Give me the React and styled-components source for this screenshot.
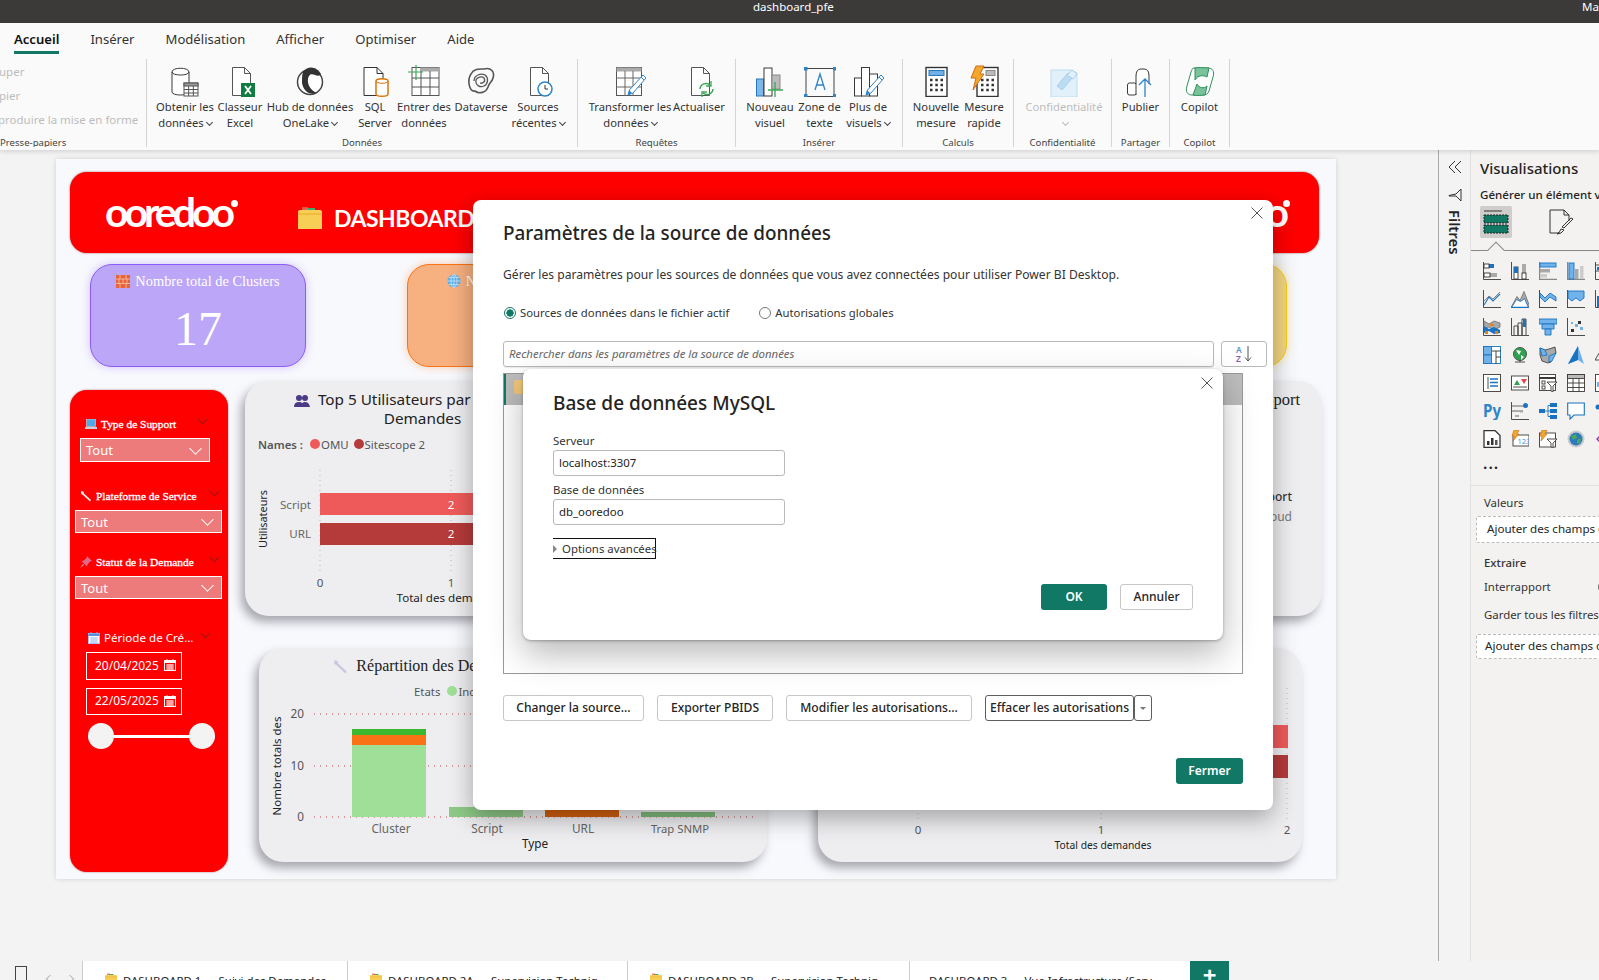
import React from 'react';
import styled, { createGlobalStyle } from 'styled-components';

const UI = '"Noto Sans", "Open Sans", sans-serif';
const SERIF = '"Liberation Serif", serif';
const TEAL = '#117865';

const Global = createGlobalStyle`
  html, body { margin: 0; padding: 0; background: #f3f3f3; overflow: hidden; }
  * { box-sizing: border-box; }
  #root { width: 1599px; height: 980px; }
  svg { display: block; }
`;

const Shell = styled.div`
  position: relative; width: 1599px; height: 980px; overflow: hidden;
  display: flex; flex-direction: column; font-family: ${UI}; color: #252423;
`;
const TitleBar = styled.header`
  height: 23px; flex: none; background: #3b3a39; color: #fff; font-size: 11.5px;
  display: flex; justify-content: space-between; padding: 0 0 0 753px; line-height: 14px;
`;
const TitleUser = styled.span` width: 17px; overflow: hidden; `;

const Ribbon = styled.section`
  height: 127px; flex: none; background: #fafafa; box-shadow: 0 2px 4px rgba(0,0,0,.12); z-index: 1;
  display: flex; flex-direction: column;
`;
const TabRow = styled.nav` height: 36px; flex: none; display: flex; padding-left: 14px; gap: 31px; `;
const RibbonTab = styled.span`
  height: 31px; padding-top: 7px; font-size: 13.1px; line-height: 18px;
  color: ${p => p.$active ? '#111' : '#333'}; font-weight: ${p => p.$active ? 600 : 400};
  border-bottom: ${p => p.$active ? `3px solid ${TEAL}` : 'none'};
`;
const GroupRow = styled.div` display: flex; height: 88px; `;
const Group = styled.div`
  width: ${p => p.$w}px; flex: none; border-right: 1px solid #d4d4d4;
  display: flex; flex-direction: column;
`;
const GroupBody = styled.div`
  flex: 1; display: flex; padding-left: ${p => p.$pad || 0}px; justify-content: ${p => p.$center ? 'center' : 'flex-start'};
`;
const GroupName = styled.div`
  height: 11px; font-size: 9.6px; line-height: 14px; text-align: center; color: #444;
`;
const ClipList = styled.div`
  padding-top: 5px; display: flex; flex-direction: column; gap: 9px; width: 146px; overflow: hidden;
  font-size: 11.5px; line-height: 15px; color: #bdbdbd;
`;
const Cut = styled.div` margin-left: ${p => p.$x || 0}px; white-space: nowrap; `;
const ClipName = styled.div` height: 11px; font-size: 9.6px; line-height: 14px; color: #444; white-space: nowrap; overflow: hidden; `;

const Item = styled.div`
  width: ${p => p.$w}px; flex: none; display: flex; flex-direction: column; align-items: center;
  font-size: 11.2px; line-height: 16px; text-align: center; white-space: nowrap;
  color: ${p => p.$muted ? '#bdbdbd' : '#333'};
`;
const ItemIcon = styled.div` height: 40px; padding-top: 6px; flex: none; `;
const Caret = styled.span`
  display: inline-block; width: 5px; height: 5px; margin-left: 3px; position: relative; top: -2px;
  border-right: 1px solid ${p => p.$muted ? '#bbb' : '#444'}; border-bottom: 1px solid ${p => p.$muted ? '#bbb' : '#444'};
  transform: rotate(45deg);
`;

const Workspace = styled.main` flex: 1; display: flex; min-height: 0; `;
const Canvas = styled.div` width: 1439px; flex: none; padding: 9px 0 0 56px; background: #f3f3f3; border-right: 1px solid #aaa; `;
const Page = styled.div`
  width: 1280px; height: 720px; background: #f8f9fd; padding-top: 13px; box-shadow: 0 0 5px rgba(0,0,0,.14);
`;
const Banner = styled.div`
  height: 81px; margin: 0 17px 0 14px; background: #f00; border-radius: 17px; box-shadow: 0 0 2px rgba(120,0,0,.7);
  display: flex; align-items: flex-start; padding: 23px 34px 0 35px; justify-content: space-between;
`;
const BannerLeft = styled.div` display: flex; align-items: flex-start; `;
const Logo = styled.div`
  position: relative; width: 128px; height: 36px; font: 700 41px/33px Lato, sans-serif; letter-spacing: -4px; color: #fff;
  margin-right: 65px;
  &::after { content: ''; position: absolute; right: -5px; top: 5px; width: 7px; height: 7px; border-radius: 50%; background: #fff; }
`;
const LogoEnd = styled(Logo)` margin-right: 0; width: 44px; text-align: right; `;
const BannerTitle = styled.div` font: 700 23px/26px Lato, sans-serif; letter-spacing: -.5px; color: #fff; white-space: nowrap; `;
const BannerGroup = styled.div` display: flex; align-items: center; gap: 12px; padding-top: 10px; `;

const KpiRow = styled.div` display: flex; margin: 11px 49px 0 34px; gap: 101px; `;
const Kpi = styled.div`
  width: ${p => p.$w}px; height: 103px; border-radius: 22px; border: 1px solid ${p => p.$line};
  margin-left: ${p => p.$push ? 'auto' : '0'};
  background: ${p => p.$bg}; box-shadow: 0 0 10px ${p => p.$glow}; color: #fff; text-align: center; padding-top: 7px;
`;
const KpiTitle = styled.div`
  display: flex; justify-content: center; align-items: center; gap: 5px; height: 18px;
  font: 400 14.4px/18px ${SERIF}; color: #fff; white-space: nowrap;
`;
const KpiValue = styled.div` font: 400 48px/56px ${SERIF}; margin-top: 11px; `;

const MainRow = styled.div` display: flex; margin: 14px 0 0 14px; `;
const Sidebar = styled.aside`
  width: 158px; height: 482px; margin-top: 9px; background: #f00; border-radius: 17px; padding-top: 26px; flex: none;
  box-shadow: 0 0 2px rgba(120,0,0,.6); color: #fff;
`;
const Filter = styled.div` margin-top: ${p => p.$top || 0}px; padding-left: ${p => p.$left}px; `;
const FilterHead = styled.div`
  height: 16px; display: flex; align-items: center; justify-content: space-between;
  padding: 0 ${p => p.$right}px 0 ${p => p.$pad}px; margin-bottom: 6px;
`;
const FilterLabel = styled.span`
  display: flex; align-items: center; gap: 4px; white-space: nowrap; color: #fff;
  font: ${p => p.$plain ? `400 11.6px/16px ${UI}` : `400 11.4px/16px ${SERIF}`};
  -webkit-text-stroke: ${p => p.$plain ? '0' : '.3px #fff'};
`;
const Fold = styled.span`
  width: 7px; height: 7px; border-right: 1px solid #a01414; border-bottom: 1px solid #a01414;
  transform: rotate(45deg); position: relative; top: -5px;
`;
const Dropdown = styled.div`
  width: ${p => p.$w}px; height: ${p => p.$h}px; background: #ee7b7b; border: 1.5px solid #fff; color: #fff;
  font-size: 13px; line-height: 20px; padding: 0 6px 0 5px; display: flex; justify-content: space-between; align-items: center;
`;
const WhiteCaret = styled.span`
  width: 9px; height: 9px; border-right: 1.5px solid #fff; border-bottom: 1.5px solid #fff; transform: rotate(45deg);
  position: relative; top: -2px; margin-right: 3px;
`;
const DateBox = styled.div`
  width: 96px; height: ${p => p.$h}px; margin: ${p => p.$top}px 0 0 16px; border: 1.5px solid #fff;
  font-size: 12px; color: #fff; display: flex; align-items: center; justify-content: space-between; padding: 0 5px 2px 8px;
`;
const Slider = styled.div`
  width: 127px; height: 26px; margin: 8px 0 0 18px; display: flex; align-items: center; justify-content: space-between;
  background: linear-gradient(#fff, #fff) center / 100% 3px no-repeat;
`;
const Knob = styled.span` width: 26px; height: 26px; border-radius: 50%; background: #f3f3f3; `;

const ChartColumn = styled.div` margin-left: 17px; display: flex; flex-direction: column; `;
const ChartRow = styled.div`
  display: flex; gap: ${p => p.$gap}px; margin: ${p => p.$top || 0}px 0 0 ${p => p.$left || 0}px;
`;
const Card = styled.article`
  width: ${p => p.$w}px; height: ${p => p.$h}px; flex: none; background: #eeeef1; border-radius: 24px;
  box-shadow: -4px 6px 10px rgba(90,90,100,.5); overflow: hidden; position: relative;
`;
const CardTitle = styled.h3`
  margin: 0; padding-top: ${p => p.$top}px; font: 400 ${p => p.$size}px/19px ${p => p.$serif ? SERIF : UI}; color: #222;
  text-align: center; height: ${p => p.$height}px; white-space: pre-line;
`;
const TitleGlyph = styled.span` display: inline-block; vertical-align: -3px; margin-right: 8px; `;
const Legend = styled.div`
  display: flex; align-items: center; height: 16px; font-size: 11.4px; color: #555; padding-left: ${p => p.$left}px; white-space: nowrap;
  margin-bottom: ${p => p.$after}px;
`;
const LegendKey = styled.span` font-weight: ${p => p.$bold ? 600 : 400}; margin-right: ${p => p.$gap}px; `;
const Dot = styled.span` width: 10px; height: 10px; border-radius: 50%; background: ${p => p.$c}; margin-right: 1px; flex: none; `;
const LegendName = styled.span` margin-right: 5px; `;

const FilterStrip = styled.div`
  width: 32px; flex: none; background: #f3f3f3; border-right: 1px solid #e1e1e1; padding-top: 10px;
  display: flex; flex-direction: column; align-items: center;
`;
const StripGlyph = styled.div` margin-top: ${p => p.$top}px; `;
const FilterWord = styled.div`
  writing-mode: vertical-rl; font-size: 14.8px; font-weight: 600; color: #252423; margin-top: 8px; line-height: 16px;
`;
const VizPane = styled.aside` flex: 1; background: #f3f2f1; overflow: hidden; `;
const VizTitle = styled.div` font-size: 15px; font-weight: 500; line-height: 20px; padding: 8px 0 0 9px; color: #252423; `;
const VizSub = styled.div` font-size: 11.6px; font-weight: 500; line-height: 16px; padding: 9px 0 0 9px; white-space: nowrap; `;
const BuildRow = styled.div`
  position: relative; height: 45px; margin-top: 3px; padding-left: 9px; display: flex; gap: 34px; border-bottom: 1px solid #8a8886;
  &::after {
    content: ''; position: absolute; left: 19px; bottom: -6px; width: 11px; height: 11px; background: #f3f2f1;
    border-left: 1px solid #8a8886; border-top: 1px solid #8a8886; transform: rotate(45deg);
  }
`;
const BuildBtn = styled.div`
  width: 32px; height: 32px; border-radius: 2px; background: ${p => p.$on ? '#cfcdcb' : 'transparent'};
  display: flex; align-items: center; justify-content: center;
`;
const VizGrid = styled.div`
  display: grid; grid-template-columns: repeat(5, 18px); grid-auto-rows: 18px; gap: 10px; padding: 11px 0 0 12px; width: 170px;
`;
const More = styled.div` padding: 9px 0 0 12px; font-size: 16px; line-height: 12px; letter-spacing: 1px; height: 37px; font-weight: 600; `;
const PaneLine = styled.div` border-top: 1px solid #e1dfdd; `;
const FieldLabel = styled.div`
  font-size: 11.4px; line-height: 16px; padding: ${p => p.$top}px 0 0 13px; white-space: nowrap; color: #333;
  font-weight: ${p => p.$semi ? 500 : 400}; width: 160px; display: flex; justify-content: space-between;
`;
const Toggle = styled.span`
  width: 33px; height: 14px; border-radius: 7px; margin-top: 1px;
  background: ${p => p.$on ? TEAL : '#fff'}; border: 1px solid ${p => p.$on ? TEAL : '#666'};
`;
const DropZone = styled.div`
  height: ${p => p.$h}px; margin: ${p => p.$top}px 0 0 5px; width: 140px; border: 1px dashed #bdbbb9; border-radius: 2px; background: #fff;
  font-size: 11.6px; line-height: ${p => p.$h - 3}px; padding-left: ${p => p.$pad}px; white-space: nowrap; overflow: hidden;
`;

const SheetBar = styled.footer` height: 19px; flex: none; display: flex; background: #f3f3f3; overflow: hidden; padding-left: 15px; `;
const PageGlyph = styled.span` width: 12px; height: 19px; border: 1px solid #444; border-bottom: none; flex: none; margin-top: 5px; `;
const Arrows = styled.span` width: 55px; flex: none; display: flex; gap: 14px; padding: 15px 0 0 20px; `;
const ArrowMark = styled.span` width: 6px; height: 6px; border-left: 1.5px solid #bbb; border-top: 1.5px solid #bbb; transform: rotate(${p => p.$r}deg); `;
const Sheet = styled.div`
  width: ${p => p.$w}px; flex: none; background: #fff; border-left: 1px solid #ccc; display: flex; gap: 6px;
  padding: 12px 0 0 ${p => p.$pad}px; font-size: 11.4px; line-height: 16px; white-space: nowrap; overflow: hidden; color: #222;
`;
const AddSheet = styled.div`
  width: 39px; flex: none; background: ${TEAL}; color: #fff; font-size: 24px; font-weight: 700; line-height: 27px; text-align: center;
`;

const Dialog = styled.section`
  position: absolute; left: 473px; top: 200px; width: 800px; height: 610px; background: #fff; border-radius: 8px; z-index: 5;
  box-shadow: 0 8px 24px rgba(0,0,0,.32); padding: 21px 30px 0;
`;
const Close = styled.div` position: absolute; right: ${p => p.$r}px; top: ${p => p.$t}px; `;
const DialogTitle = styled.h2` margin: 0; font-size: 18.9px; font-weight: 500; line-height: 24px; color: #252423; `;
const DialogText = styled.p` margin: 21px 0 0; font-size: 12.1px; line-height: 18px; color: #333; white-space: nowrap; `;
const RadioRow = styled.div` display: flex; margin-top: 19px; height: 18px; align-items: center; font-size: 11.3px; color: #333; white-space: nowrap; `;
const Radio = styled.span`
  width: 12px; height: 12px; border-radius: 50%; border: 1px solid ${p => p.$on ? TEAL : '#777'}; flex: none; margin: 1px 4px 0 ${p => p.$left || 1}px;
  background: ${p => p.$on ? `radial-gradient(circle, ${TEAL} 0 3.4px, #fff 3.9px)` : '#fff'};
`;
const SearchRow = styled.div` display: flex; gap: 7px; margin-top: 20px; `;
const SearchBox = styled.div`
  width: 711px; height: 26px; flex: none; border: 1px solid #b9b9b9; border-radius: 3px; padding-left: 5px; font-style: italic;
  font-size: 11.4px; line-height: 24px; color: #666; box-shadow: 0 1px 1px rgba(0,0,0,.08);
`;
const SortBtn = styled.div`
  width: 46px; height: 26px; flex: none; border: 1px solid #b9b9b9; border-radius: 3px; display: flex; align-items: center; justify-content: center;
`;
const ListBox = styled.div` width: 740px; height: 301px; margin-top: 6px; border: 1px solid #999; background: #fff; `;
const ListHead = styled.div` height: 31px; background: #bdbdbd; border-left: 2px solid ${TEAL}; padding: 6px 0 0 8px; `;
const ListMark = styled.span` display: block; width: 14px; height: 14px; background: #f1c67a; border-radius: 2px; `;
const ActionRow = styled.div` display: flex; gap: 13px; margin-top: 21px; `;
const Action = styled.button`
  width: ${p => p.$w}px; height: 26px; padding: 0; background: #fff; font: 500 12.1px/22px ${UI}; color: #252423; flex: none;
  border: 1px solid ${p => p.$dark ? '#605e5c' : '#c8c6c4'}; border-radius: 3px; white-space: nowrap;
`;
const SplitCaret = styled(Action)` margin-left: -13px; display: flex; align-items: center; justify-content: center; `;
const CaretDown = styled.span` width: 0; height: 0; border: 3px solid transparent; border-top: 3px solid #777; border-bottom: none; `;
const Primary = styled.button`
  width: ${p => p.$w}px; height: 26px; padding: 0; border: none; border-radius: 3px; background: ${TEAL}; color: #fff;
  font: 600 12px/26px ${UI};
`;
const DialogFoot = styled.div` display: flex; justify-content: flex-end; margin: 37px 0 0; `;

const InnerDialog = styled.section`
  position: absolute; left: 50px; top: 169px; width: 700px; height: 271px; background: #fff; border-radius: 8px;
  box-shadow: 0 1px 3px rgba(0,0,0,.3), 0 14px 34px rgba(0,0,0,.28); padding: 22px 30px 0;
`;
const InnerTitle = styled.h2` margin: 0; font-size: 19px; font-weight: 500; line-height: 24px; color: #252423; `;
const InnerLabel = styled.label` display: block; font-size: 11.4px; line-height: 16px; margin-top: ${p => p.$top}px; color: #333; `;
const InnerInput = styled.div`
  width: 232px; height: 26px; margin-top: 1px; border: 1px solid #b9b9b9; border-radius: 3px; font-size: 11.4px; line-height: 24px; padding-left: 5px; color: #222;
`;
const Advanced = styled.div`
  width: 103px; height: 21px; margin-top: 13px; border: 1px solid #111; border-left: none; font-size: 11.4px; line-height: 19px; color: #333;
  display: flex; align-items: center; gap: 5px; white-space: nowrap;
`;
const Tri = styled.span` width: 0; height: 0; border-left: 4px solid #888; border-top: 4px solid transparent; border-bottom: 4px solid transparent; flex: none; `;
const InnerFoot = styled.div` display: flex; justify-content: flex-end; gap: 13px; margin: 25px 0 0; `;

/* ---- drawings ---- */
const Ic = ({ children, s = 32, vb = 32 }) => (
  <svg width={s} height={s} viewBox={`0 0 ${vb} ${vb}`} fill="none" stroke="#3b3a39" strokeWidth="1">{children}</svg>
);
const Doc = () => <path d="M8.5 2.5h12l6 6v22h-18z M20.5 2.5v6h6" fill="#fff" stroke="#555" />;
const TableG = ({ x = 16, y = 17, w = 13, h = 13 }) => (
  <g stroke="#555"><rect x={x} y={y} width={w} height={h} fill="#fff" /><rect x={x} y={y} width={w} height={3} fill="#999" />
    <path d={`M${x + w / 3} ${y + 3}v${h - 3}M${x + 2 * w / 3} ${y + 3}v${h - 3}M${x} ${y + 6.5}h${w}M${x} ${y + 10}h${w}`} /></g>
);
const Pencil = () => <g><path d="M29 10l3 3-13 15-5 2 1.500-5z" fill="#fff" stroke="#2d84c8" /><path d="M27 12l3 3" stroke="#2d84c8" /><path d="M15 25l3 3-4 2z" fill="#2d84c8" stroke="none" /></g>;
const Icons = {
  obtenir: <Ic><path d="M3 7c0-5 17-5 17 0v20c0 4-17 4-17 0z" fill="#fff" /><path d="M3 7c0 4 17 4 17 0" /><TableG x={15} y={18} w={14} h={13} /></Ic>,
  excel: <Ic><Doc /><rect x="17" y="18" width="14" height="14" fill="#107c41" stroke="none" /><path d="M21 21l6 8M27 21l-6 8" stroke="#fff" strokeWidth="1.800" /></Ic>,
  hub: <Ic><circle cx="16" cy="17" r="12.500" fill="#fff" stroke="#444" strokeWidth="1.500" /><path d="M9 7c6-8 15-4 18 2-3 5-9-3-12 2s0 14 8 17c-8 3-14-3-15-10 0-5 0-8 1-11z" fill="#333" stroke="none" /></Ic>,
  sql: <Ic><path d="M5 2.500h13l6 6v22H5z M18 2.500v6h6" fill="#fff" stroke="#333" /><path d="M17 16c0-3 12-3 12 0v13c0 3-12 3-12 0z" fill="#fff" stroke="#d97706" strokeWidth="1.500" /><path d="M17 16c0 3 12 3 12 0" stroke="#d97706" /></Ic>,
  entrer: <Ic><rect x="4" y="2.500" width="27" height="28" fill="#fff" stroke="#555" /><rect x="12" y="2.500" width="19" height="4" fill="#aaa" stroke="none" /><path d="M4 13h27M4 22h27M13 6v25M22 6v25" stroke="#555" /><path d="M8 0v15M0 7h15" stroke="#3aa655" strokeWidth="1.200" /></Ic>,
  dataverse: <Ic><path d="M6 9c3-6 9-5 13-5 7-2 11 3 9 9-1 4-4 5-5 9-2 6-9 7-13 4C4 27 2 15 6 9z" stroke="#555" strokeWidth="1.600" /><path d="M9 16c0-6 7-8 11-6 4 3 3 9-1 11-4 2-9-1-8-6 1-3 6-4 8-2 2 3-1 6-4 5" stroke="#555" strokeWidth="1.300" /></Ic>,
  sources: <Ic><Doc /><circle cx="23" cy="24" r="7" fill="#fff" stroke="#2d84c8" strokeWidth="1.500" /><path d="M23 20v4h3" stroke="#333" /></Ic>,
  transform: <Ic><rect x="2.500" y="2.500" width="25" height="28" fill="#fff" stroke="#555" /><rect x="2.500" y="2.500" width="25" height="4" fill="#aaa" stroke="none" /><path d="M2 13h26M2 22h26M11 6v25M19 6v25" stroke="#666" /><Pencil /></Ic>,
  refresh: <Ic><Doc /><path d="M17 24a6 6 0 0 1 10-4M30 24a6 6 0 0 1-10 4" stroke="#3aa655" strokeWidth="1.500" fill="none" /><path d="M28 16v5h-5M19 32v-5h5" stroke="#3aa655" strokeWidth="1.300" /></Ic>,
  visual: <Ic><rect x="2.500" y="14" width="7" height="17" fill="#7cb8ea" stroke="#2a77b8" /><rect x="10" y="3" width="8" height="28" fill="#fff" /><rect x="18" y="10" width="8" height="14" fill="#bbb" stroke="#888" /><path d="M21 17v15M14 25h15" stroke="#3aa655" strokeWidth="1.300" /></Ic>,
  textbox: <Ic><rect x="2" y="3.500" width="28" height="28" stroke="#444" /><rect x="0" y="2" width="3.500" height="3.500" fill="#2d84c8" stroke="none" /><rect x="29" y="2" width="3.500" height="3.500" fill="#2d84c8" stroke="none" /><rect x="0" y="29" width="3.500" height="3.500" fill="#2d84c8" stroke="none" /><rect x="29" y="29" width="3.500" height="3.500" fill="#2d84c8" stroke="none" /><path d="M11 25l5-16 5 16M12.800 20h6.500" stroke="#2d84c8" strokeWidth="1.300" /></Ic>,
  morevis: <Ic><rect x="2.500" y="13" width="7" height="18" fill="#fff" /><rect x="9.500" y="2.500" width="8" height="28.500" fill="#fff" /><rect x="17.500" y="9" width="8" height="22" fill="#fff" /><Pencil /></Ic>,
  calc: <Ic><rect x="6" y="2.500" width="21" height="29" fill="#fff" stroke="#333" strokeWidth="1.400" /><rect x="9" y="5.500" width="15" height="5" fill="#6fb0e6" stroke="#2a77b8" /><path d="M10 15h2.500M15.300 15h2.500M20.500 15h2.500M10 20h2.500M15.300 20h2.500M20.500 20h2.500M10 25h2.500M15.300 25h2.500M20.500 25h2.500" stroke="#333" strokeWidth="2.500" /></Ic>,
  quick: <Ic><rect x="9" y="2.500" width="21" height="29" fill="#fff" stroke="#333" strokeWidth="1.400" /><rect x="18" y="5.500" width="9" height="5" fill="#bbb" stroke="#888" /><path d="M13 15h2.500M18.300 15h2.500M23.500 15h2.500M13 20h2.500M18.300 20h2.500M23.500 20h2.500M13 25h2.500M18.300 25h2.500M23.500 25h2.500" stroke="#333" strokeWidth="2.500" /><path d="M8 1h8l-4 8h4L5 25l3-12H3z" fill="#f2a72e" stroke="#d26a12" /></Ic>,
  secure: <Ic><path d="M3 5h20l6 3v24H3z" fill="#e2f0fa" stroke="#bcdcf2" /><path d="M9 21l11-13 5 4-11 13z" fill="#bcdcf2" stroke="#a5d0ee" /><path d="M19 10l5-5 5 4-4 5z" fill="#e2f0fa" stroke="#a5d0ee" /></Ic>,
  publish: <Ic><rect x="2.500" y="18" width="9" height="12" rx="2" fill="#fff" /><path d="M11 30V11q0-7 5-7h3q5 0 5 7v8" fill="#fff" /><path d="M20 32V14M14 20l6-6 6 6" stroke="#2d84c8" strokeWidth="1.300" /></Ic>,
  copilot: <Ic><path d="M10 3h14c4 0 7 3 5 9l-4 14c-1 3-3 4-6 4H8c-4 0-7-3-5-9L7 7c1-2 1-4 3-4z" fill="#fff" stroke="#2f8f5b" /><path d="M11 3c4-1 12 0 14 0l-2 9c-4-2-9-2-12 3z" fill="#7ac29a" stroke="#2f8f5b" /><path d="M9 30c4 1 10 0 12 0l2-9c-3 3-8 2-10-2z" fill="#7ac29a" stroke="#2f8f5b" /></Ic>,
};

const Folder = ({ s = 24 }) => (
  <svg width={s} height={s} viewBox="0 0 24 24"><path d="M7 2h10v4H7z" fill="#3cb06a" /><path d="M4 1h6v5H4z" fill="#e86a5c" opacity=".8" /><path d="M0 6q0-2 2-2h20q2 0 2 2v17H0z" fill="#f8cf56" /><path d="M0 7h24v2H0z" fill="#f2bb3e" /></svg>
);
const Brick = () => (
  <svg width="14" height="13" viewBox="0 0 14 13"><rect width="14" height="13" fill="#e8623a" /><path d="M0 4h14M0 8.500h14M4 0v4M10 0v4M7 4v4.500M3 4v4.500M11 4v4.500M4 8.500V13M10 8.500V13" stroke="#f4c9a8" strokeWidth=".8" /></svg>
);
const Globe = () => (
  <svg width="14" height="14" viewBox="0 0 14 14"><circle cx="7" cy="7" r="6.500" fill="#5ab0ea" /><path d="M.5 7h13M7 .5v13M2 3.500h10M2 10.500h10" stroke="#cde7fa" strokeWidth=".8" /><ellipse cx="7" cy="7" rx="3" ry="6.500" fill="none" stroke="#cde7fa" strokeWidth=".8" /></svg>
);
const Laptop = () => (
  <svg width="12" height="11" viewBox="0 0 12 11"><rect x="1.500" y="0" width="9" height="7.500" fill="#4fa8e8" stroke="#ddd" strokeWidth=".6" /><path d="M0 8h12v2H0z" fill="#c9d2dc" /></svg>
);
const Wrench = ({ c = '#e8e8e8', s = 12 }) => (
  <svg width={s} height={s} viewBox="0 0 12 12"><path d="M1 1l2.500.5.5 2 7 6.500-1 1.500L3 5 1.200 4z" fill={c} /></svg>
);
const Pin = () => (
  <svg width="12" height="12" viewBox="0 0 12 12"><path d="M7 0l5 5-2 .5-2.500 3L7 10.500 1.500 5 4 4.500 6.500 2z" fill="#e06a8a" /><path d="M3 8l-3 4 4-3z" fill="#d9a0a8" /></svg>
);
const Cal = ({ s = 12, head = '#fff', body = '#f00', grid = '#fff' }) => (
  <svg width={s} height={s} viewBox="0 0 12 12"><rect x=".5" y="1.500" width="11" height="10" fill={body} stroke={grid} /><rect x=".5" y="1.500" width="11" height="2.500" fill={head} /><path d="M3 0v2M9 0v2M2 6h8M2 8h8M2 10h8M4 5v6M6 5v6M8 5v6" stroke={grid} strokeWidth=".8" /></svg>
);
const People = () => (
  <svg width="16" height="14" viewBox="0 0 16 14"><g fill="#4b3a86"><circle cx="5" cy="4" r="3" /><circle cx="11" cy="4" r="3" /><path d="M0 13q0-5 5-5t3 5zM8 13q-1-5 3-5t5 5z" /></g></svg>
);
const X = () => (
  <svg width="12" height="12" viewBox="0 0 12 12"><path d="M.5.500l11 11M11.500.500l-11 11" stroke="#555" strokeWidth="1" /></svg>
);
const Sort = () => (
  <svg width="18" height="18" viewBox="0 0 18 18"><text x="1" y="8" fontSize="8.500" fontFamily={UI} fontWeight="600" fill="#5a8fc8">A</text><text x="1" y="16.500" fontSize="8.500" fontFamily={UI} fontWeight="600" fill="#8d5bb8">Z</text><path d="M13 1v15M10 12.500l3 3.500 3-3.500" stroke="#555" fill="none" /></svg>
);

const V = ({ children }) => <svg width="18" height="18" viewBox="0 0 18 18" fill="none" stroke="#3b3a39" strokeWidth=".9">{children}</svg>;
const B1 = '#1a73c0', B2 = '#71b2ea', G1 = '#a9a9a9', AX = 'M.5 0v17.500h17.500';
const VizIcons = [
  <V><path d={AX} /><rect x="1" y="2" width="10" height="4" fill={B1} stroke="none" /><rect x="1" y="2" width="5" height="4" fill="#fff" stroke="#333" /><rect x="1" y="11" width="13" height="4" fill={G1} stroke="none" /><rect x="1" y="11" width="6" height="4" fill="#fff" stroke="#333" /></V>,
  <V><path d={AX} /><rect x="3" y="5" width="4" height="12" fill="#fff" /><rect x="3" y="5" width="4" height="6" fill={B1} stroke="none" /><rect x="11" y="2" width="4" height="15" fill={G1} stroke="none" /><rect x="11" y="11" width="4" height="6" fill="#fff" stroke="#333" /></V>,
  <V><path d="M.5 0v18M0 17.500h18" stroke="#888" strokeWidth="1.500" /><rect x="1" y="1" width="16" height="4" fill={B2} stroke={B1} /><rect x="1" y="7" width="10" height="3.500" fill={G1} stroke="none" /><rect x="1" y="12" width="7" height="3.500" fill="#ccc" stroke="none" /></V>,
  <V><path d="M.5 0v18M0 17.500h18" stroke="#888" strokeWidth="1.500" /><rect x="2" y="1" width="5" height="16" fill={B2} stroke={B1} /><rect x="8" y="7" width="3.500" height="10" fill={G1} stroke="none" /><rect x="13" y="4" width="3.500" height="13" fill="#ccc" stroke="none" /></V>,
  <V><path d={AX} /><path d="M0 3h18M0 9h18" /><rect x="2" y="5" width="14" height="3" fill={B1} stroke="none" /></V>,
  <V><path d={AX} /><path d="M1 15l5-8 4 4 7-7" stroke={B1} strokeWidth="1.100" /><path d="M1 11l5-5 4 3 7-7" stroke="#777" /></V>,
  <V><path d="M0 17.500l6-11 3 4 4-9 5 13v3z" fill={G1} stroke="#777" /><path d="M.5 17.500l5-8 4 2 4-3 4 9z" fill="#fff" stroke={B1} /><path d="M.5 17.500h17" stroke={B1} strokeWidth="1.500" /></V>,
  <V><path d="M.5 0v18" stroke="#333" /><path d="M1 3l5 5 5-5 6 4v4l-6-4-5 5-5-5z" fill={B2} stroke={B1} /><path d="M0 17.500h18" stroke="#333" /></V>,
  <V><path d="M.5 0v18M0 17.500h18" /><path d="M1 1h16v7l-4 3-4-3-4 3-4-3z" fill={B2} stroke={B1} /></V>,
  <V><path d={AX} /><rect x="2" y="6" width="4" height="11" fill={B1} stroke="none" /></V>,
  <V><path d={AX} /><path d="M1 3l5 3 5-3 6 2v4l-6 3-5-3-5 1z" fill={G1} stroke="#777" /><path d="M1 8l5 3 5-2 6 3v3l-6 1-5-3-5 2z" fill={B1} stroke="none" /><path d="M2 13h3v3H2zM12 13h3v3h-3zM7 6h4v2H7z" fill="#e8801a" stroke="none" /></V>,
  <V><path d={AX} /><path d="M3 17V8h4v9M7 17V5h4v12M11 17V1h4v16" /><rect x="12" y="1" width="3" height="8" fill={B1} stroke="none" /></V>,
  <V><path d="M0 1h18v5H0z" fill={B2} stroke={B1} /><path d="M3 6h12v5H3z" fill={B2} stroke={B1} /><path d="M6 11h6v6H6z" fill={B2} stroke={B1} /></V>,
  <V><path d={AX} /><path d="M4 11h3v3H4zM11 3h3v3h-3z" fill="#333" stroke="none" /><path d="M4 4h2v2H4zM8 6h3v3H8zM13 9h3v3h-3z" fill={B2} stroke="none" /></V>,
  <V><circle cx="14" cy="9" r="8" /></V>,
  <V><rect x=".5" y=".5" width="17" height="17" fill="#fff" stroke={B1} /><rect x=".5" y=".5" width="8" height="8.500" fill={B2} stroke={B1} /><rect x=".5" y="9" width="8" height="8.500" fill={B2} stroke={B1} /><path d="M9 5h9M13 5v13M13 11h5" stroke="#333" /></V>,
  <V><circle cx="9" cy="8" r="6.500" fill="#2ea34f" stroke="#444" /><path d="M5 4l5 1-2 4zM10 9l3 2-3 3z" fill="#fff" stroke="none" /><path d="M4 16h10M9 14v2" /></V>,
  <V><path d="M1 2l5 2 4-1 6-2 1 6-4 3-1 6-3 1-6-2-2-6z" fill={G1} stroke="#444" /><path d="M1 2l5 2 2 5-5 1zM10 10l7-3-4 8-3 1z" fill={B2} stroke={B1} /></V>,
  <V><path d="M11 0l6 18-6-4-10 4z" fill={B2} stroke="none" /><path d="M11 0v14l-10 4z" fill={B1} stroke="none" /></V>,
  <V><path d="M0 14l6-10 6 10z" /></V>,
  <V><rect x=".5" y=".5" width="17" height="17" fill="#fff" /><path d="M5 3v12" /><path d="M7 5h8M7 8.500h8M7 12h8" stroke={B1} strokeWidth="1.500" /></V>,
  <V><rect x=".5" y="2" width="17" height="14" fill="#fff" /><path d="M3 11l3-5 3 5z" fill="#2ea34f" stroke="none" /><path d="M10 5h6l-3 5z" fill="#e8424a" stroke="none" /><path d="M2 13h14" /></V>,
  <V><rect x=".5" y=".5" width="16" height="16" fill="#fff" /><path d="M0 4h17" strokeWidth="2" /><rect x="3" y="7" width="3" height="3" /><rect x="3" y="12" width="3" height="3" /><path d="M8 8h10l-4 4v6l-2-1v-5z" fill="#fff" /></V>,
  <V><rect x=".5" y=".5" width="17" height="17" fill="#fff" /><rect x=".5" y=".5" width="17" height="4" fill="#bbb" /><path d="M6 5v13M12 5v13M0 9h18M0 13.500h18" /></V>,
  <V><rect x=".5" y=".5" width="17" height="17" fill="#fff" /><rect x="2" y="8" width="14" height="5" fill={B2} stroke="none" /></V>,
  <V><text x="0" y="15" fontSize="17" fontWeight="700" fontFamily={UI} fill="#2d84c8" stroke="none" textLength="18" lengthAdjust="spacingAndGlyphs">Py</text></V>,
  <V><path d={AX} /><path d="M1 4h11M1 9h8M4 14h4" stroke="#555" /><circle cx="14.500" cy="3.500" r="2.500" fill={B1} stroke="none" /><rect x="9" y="8" width="3" height="2.500" fill={G1} stroke="none" /></V>,
  <V><rect x="0" y="7" width="6" height="4" fill={B1} stroke="none" /><path d="M6 9h3M9 3.500v11M9 3.500h3M9 9h3M9 14.500h3" stroke={B1} /><rect x="11" y="1" width="7" height="4" fill={B1} stroke="none" /><rect x="11" y="7" width="7" height="4" fill={B1} stroke="none" /><rect x="11" y="13" width="7" height="4" fill={B1} stroke="none" /></V>,
  <V><path d="M.7 1h16.600v12H7l-4 4v-4H.7z" fill="#fff" stroke={B1} strokeWidth="1.100" /></V>,
  <V><path d="M4 5h14M4 14h14" /><circle cx="3" cy="5" r="2.500" fill={B1} stroke="none" /></V>,
  <V><path d="M1 .5h11l5 5v12H1z" fill="#fff" stroke="#333" strokeWidth="1.300" /><rect x="4" y="11" width="2.500" height="4" fill="#333" stroke="none" /><rect x="8" y="8" width="2.500" height="7" fill="#333" stroke="none" /><rect x="12" y="10" width="2.500" height="5" fill="#555" stroke="none" /></V>,
  <V><rect x="2" y="5" width="16" height="11" fill="#fff" /><path d="M3 0h5l-2 4h2L2 11l1-5H1z" fill="#f2a72e" stroke="#c8641a" strokeWidth=".6" /><text x="6.500" y="14" fontSize="7.500" fill="#3a92d8" stroke="none" fontFamily={UI}>123</text></V>,
  <V><rect x=".5" y="3" width="16" height="14" fill="#fff" /><path d="M3 0h5l-2 4h2L2 11l1-5H1z" fill="#f2a72e" stroke="#c8641a" strokeWidth=".6" /><path d="M8 9h10l-4 4v5l-2-1v-4z" fill="#fff" /></V>,
  <V><circle cx="9" cy="9" r="8.500" fill="#ccc" stroke="none" /><circle cx="9" cy="9" r="6.500" fill="#2a7bbe" stroke="none" /><path d="M4 6l5-2 1 4-4 2zM10 10l4-2-1 5-3 1z" fill="#4ca85a" stroke="none" /></V>,
  <V><path d="M2 9l6-6 6 6-6 6z" stroke="#8a3aa0" strokeWidth="1.400" /></V>,
];

const Chart1 = () => (
  <svg width="355" height="156" viewBox="0 0 355 156" fontFamily={UI} fontSize="11.600">
    <path d="M75 10v105M206 10v105M337 10v105" stroke="#b5b5b5" strokeDasharray="1 4" />
    <rect x="75" y="33" width="262" height="22" fill="#ee5a5a" />
    <rect x="75" y="63" width="262" height="22" fill="#b53a3a" />
    <g textAnchor="end" fill="#666"><text x="66" y="49">Script</text><text x="66" y="78">URL</text></g>
    <g textAnchor="middle" fill="#fff"><text x="206" y="49">2</text><text x="206" y="78">2</text></g>
    <g textAnchor="middle" fill="#555"><text x="75" y="127">0</text><text x="206" y="127">1</text></g>
    <text x="206" y="142" textAnchor="middle" fill="#222">Total des demandes</text>
    <text transform="translate(22 59) rotate(-90)" textAnchor="middle" fontSize="10.900" fill="#222">Utilisateurs</text>
  </svg>
);
const Chart2 = () => (
  <svg width="702" height="235" viewBox="0 0 702 235" fontFamily={UI}>
    <text x="680" y="24" textAnchor="end" fontFamily={SERIF} fontSize="16.500" fill="#222">Support</text>
    <text x="672" y="120" textAnchor="end" fontSize="12" fontWeight="500" fill="#333">Support</text>
    <text x="672" y="140" textAnchor="end" fontSize="12" fill="#777">Cloud</text>
  </svg>
);
const Chart3 = () => (
  <svg width="508" height="162" viewBox="0 0 508 162" fontFamily={UI} fontSize="11.800">
    <path d="M55 14h441M55 66h441M55 117h441" stroke="#c0484a" strokeDasharray="1 5" />
    <rect x="93" y="45" width="74" height="72" fill="#9fdf97" />
    <rect x="93" y="35" width="74" height="10" fill="#f97316" />
    <rect x="93" y="29" width="74" height="6" fill="#3cb82e" />
    <rect x="190" y="107" width="74" height="10" fill="#8ec987" />
    <rect x="286" y="100" width="74" height="17" fill="#d2600f" />
    <rect x="382" y="112" width="74" height="5" fill="#80bc7a" />
    <g textAnchor="end" fill="#555"><text x="45" y="18">20</text><text x="45" y="70">10</text><text x="45" y="121">0</text></g>
    <g textAnchor="middle" fill="#666"><text x="132" y="133">Cluster</text><text x="228" y="133">Script</text><text x="324" y="133">URL</text><text x="421" y="133" fontSize="11.300">Trap SNMP</text></g>
    <text x="276" y="148" textAnchor="middle" fill="#222">Type</text>
    <text transform="translate(22 66) rotate(-90)" textAnchor="middle" fontSize="11.400" fill="#222">Nombre totals des</text>
  </svg>
);
const Chart4 = () => (
  <svg width="484" height="214" viewBox="0 0 484 214" fontFamily={UI} fontSize="11.500">
    <path d="M100 40v135M283 40v135M469 40v135" stroke="#bbb" strokeDasharray="1 4" />
    <rect x="100" y="77" width="370" height="23" fill="#ee5a5a" />
    <rect x="100" y="107" width="370" height="23" fill="#b53a3a" />
    <g textAnchor="middle" fill="#555"><text x="100" y="186">0</text><text x="283" y="186">1</text><text x="469" y="186">2</text></g>
    <text x="285" y="201" textAnchor="middle" fontSize="10.300" fill="#222">Total des demandes</text>
  </svg>
);

const groups = [
  { w: 431, pad: 9, name: 'Données', items: [
    [58, 'obtenir', 'Obtenir les', 'données', true], [52, 'excel', 'Classeur', 'Excel'], [88, 'hub', 'Hub de données', 'OneLake', true],
    [42, 'sql', 'SQL', 'Server'], [56, 'entrer', 'Entrer des', 'données'], [58, 'dataverse', 'Dataverse'], [56, 'sources', 'Sources', 'récentes', true]] },
  { w: 158, pad: 18, name: 'Requêtes', items: [[68, 'transform', 'Transformer les', 'données', true], [70, 'refresh', 'Actualiser']] },
  { w: 167, pad: 9, name: 'Insérer', items: [[50, 'visual', 'Nouveau', 'visuel'], [49, 'textbox', 'Zone de', 'texte'], [48, 'morevis', 'Plus de', 'visuels', true]] },
  { w: 111, pad: 8, name: 'Calculs', items: [[50, 'calc', 'Nouvelle', 'mesure'], [46, 'quick', 'Mesure', 'rapide']] },
  { w: 98, pad: 7, name: 'Confidentialité', items: [[86, 'secure', 'Confidentialité', '', true, true]] },
  { w: 58, pad: 0, name: 'Partager', center: true, items: [[58, 'publish', 'Publier']] },
  { w: 60, pad: 0, name: 'Copilot', center: true, items: [[60, 'copilot', 'Copilot']] },
];

export default function App() {
  return (
    <Shell>
      <Global />
      <TitleBar><span>dashboard_pfe</span><TitleUser>Ma</TitleUser></TitleBar>
      <Ribbon>
        <TabRow>
          <RibbonTab $active>Accueil</RibbonTab>
          <RibbonTab>Insérer</RibbonTab>
          <RibbonTab>Modélisation</RibbonTab>
          <RibbonTab>Afficher</RibbonTab>
          <RibbonTab>Optimiser</RibbonTab>
          <RibbonTab>Aide</RibbonTab>
        </TabRow>
        <GroupRow>
          <Group $w={147}>
            <GroupBody>
              <ClipList>
                <Cut $x={-1}>uper</Cut>
                <Cut $x={-1}>pier</Cut>
                <Cut $x={-2}>produire la mise en forme</Cut>
              </ClipList>
            </GroupBody>
            <ClipName>Presse-papiers</ClipName>
          </Group>
          {groups.map(g => (
            <Group key={g.name} $w={g.w}>
              <GroupBody $pad={g.pad} $center={g.center}>
                {g.items.map(([w, icon, a, b, caret, muted]) => (
                  <Item key={icon} $w={w} $muted={muted}>
                    <ItemIcon>{Icons[icon]}</ItemIcon>
                    <span>{a}</span>
                    {(b !== undefined) && <span>{b}{caret && <Caret $muted={muted} />}</span>}
                  </Item>
                ))}
              </GroupBody>
              <GroupName>{g.name}</GroupName>
            </Group>
          ))}
        </GroupRow>
      </Ribbon>

      <Workspace>
        <Canvas>
          <Page>
            <Banner>
              <BannerLeft>
                <Logo>ooredoo</Logo>
                <BannerGroup><Folder /><BannerTitle>DASHBOARD 3 — Vue Infrastructure</BannerTitle></BannerGroup>
              </BannerLeft>
              <LogoEnd>oo</LogoEnd>
            </Banner>
            <KpiRow>
              <Kpi $w={216} $bg="#bca6f8" $line="#8b5cf6" $glow="rgba(139,92,246,.35)">
                <KpiTitle><Brick />Nombre total de Clusters</KpiTitle>
                <KpiValue>17</KpiValue>
              </Kpi>
              <Kpi $w={246} $bg="#f7b07f" $line="#f97316" $glow="rgba(249,115,22,.35)">
                <KpiTitle><Globe />Nombre total de Serveurs</KpiTitle>
              </Kpi>
              <Kpi $w={260} $push $bg="#f3d77f" $line="#facc15" $glow="rgba(250,204,21,.35)" />
            </KpiRow>
            <MainRow>
              <Sidebar>
                <Filter $left={10}>
                  <FilterHead $pad={5} $right={22}>
                    <FilterLabel><Laptop />Type de Support</FilterLabel><Fold />
                  </FilterHead>
                  <Dropdown $w={130} $h={24}>Tout<WhiteCaret /></Dropdown>
                </Filter>
                <Filter $left={5} $top={26}>
                  <FilterHead $pad={5} $right={10}>
                    <FilterLabel><Wrench />Plateforme de Service</FilterLabel><Fold />
                  </FilterHead>
                  <Dropdown $w={147} $h={23}>Tout<WhiteCaret /></Dropdown>
                </Filter>
                <Filter $left={5} $top={21}>
                  <FilterHead $pad={5} $right={10}>
                    <FilterLabel><Pin />Statut de la Demande</FilterLabel><Fold />
                  </FilterHead>
                  <Dropdown $w={147} $h={23}>Tout<WhiteCaret /></Dropdown>
                </Filter>
                <Filter $left={0} $top={31}>
                  <FilterHead $pad={18} $right={19}>
                    <FilterLabel $plain><Cal head="#5a8fe0" body="#fff" grid="#a8bff0" />Période de Cré...</FilterLabel><Fold />
                  </FilterHead>
                  <DateBox $h={28} $top={0}>20/04/2025<Cal /></DateBox>
                  <DateBox $h={27} $top={8}>22/05/2025<Cal /></DateBox>
                  <Slider><Knob /><Knob /></Slider>
                </Filter>
              </Sidebar>
              <ChartColumn>
                <ChartRow $gap={20}>
                  <Card $w={355} $h={235}>
                    <CardTitle $top={9} $size={15.300} $height={55}>
                      <TitleGlyph><People /></TitleGlyph>{'Top 5 Utilisateurs par Volume de\nDemandes'}
                    </CardTitle>
                    <Legend $left={13} $after={8}>
                      <LegendKey $bold $gap={7}>Names :</LegendKey>
                      <Dot $c="#ee5a5a" /><LegendName>OMU</LegendName>
                      <Dot $c="#b53a3a" /><LegendName>Sitescope 2</LegendName>
                    </Legend>
                    <Chart1 />
                  </Card>
                  <Card $w={702} $h={235}><Chart2 /></Card>
                </ChartRow>
                <ChartRow $gap={51} $top={32} $left={14}>
                  <Card $w={508} $h={214}>
                    <CardTitle $top={8} $size={16} $height={35} $serif>
                      <TitleGlyph><Wrench c="#c9c5e2" s={15} /></TitleGlyph>Répartition des Demandes par Type et par son Statut
                    </CardTitle>
                    <Legend $left={155} $after={1}>
                      <LegendKey $gap={7}>Etats</LegendKey><Dot $c="#9fdf97" /><LegendName>Incident</LegendName>
                    </Legend>
                    <Chart3 />
                  </Card>
                  <Card $w={484} $h={214}><Chart4 /></Card>
                </ChartRow>
              </ChartColumn>
            </MainRow>
          </Page>
        </Canvas>
        <FilterStrip>
          <svg width="14" height="14" viewBox="0 0 14 14" fill="none" stroke="#333"><path d="M7 1L1 7l6 6M13 1L7 7l6 6" /></svg>
          <StripGlyph $top={14}>
            <svg width="14" height="14" viewBox="0 0 14 14" fill="none" stroke="#333"><path d="M13 1v12L8 8H1l0-.5L8 6z" /></svg>
          </StripGlyph>
          <FilterWord>Filtres</FilterWord>
        </FilterStrip>
        <VizPane>
          <VizTitle>Visualisations</VizTitle>
          <VizSub>Générer un élément visuel</VizSub>
          <BuildRow>
            <BuildBtn $on>
              <svg width="26" height="26" viewBox="0 0 26 26" fill="none"><path d="M1 2h18" stroke="#333" /><rect x="1" y="6" width="24" height="8" fill={TEAL} stroke="#222" strokeDasharray="2 1" /><rect x="1" y="16" width="24" height="8" fill={TEAL} stroke="#222" strokeDasharray="2 1" /></svg>
            </BuildBtn>
            <BuildBtn>
              <svg width="26" height="26" viewBox="0 0 26 26" fill="none" stroke="#333"><path d="M1 1h14l5 5v6M15 1v5h5M1 1v23h10" /><path d="M24 10L15 19l-2-1 9-9zM12 20l3 1-3 3-4 1q3-2 4-5z" /></svg>
            </BuildBtn>
          </BuildRow>
          <VizGrid>{VizIcons.map((ic, i) => <div key={i}>{ic}</div>)}</VizGrid>
          <More>...</More>
          <PaneLine />
          <FieldLabel $top={9}>Valeurs</FieldLabel>
          <DropZone $h={27} $top={5} $pad={10}>Ajouter des champs de données ici</DropZone>
          <FieldLabel $top={12} $semi>Extraire</FieldLabel>
          <FieldLabel $top={8}>Interrapport<Toggle /></FieldLabel>
          <FieldLabel $top={12}>Garder tous les filtres<Toggle $on /></FieldLabel>
          <DropZone $h={25} $top={11} $pad={8}>Ajouter des champs de données ici</DropZone>
        </VizPane>
      </Workspace>
      <SheetBar>
        <PageGlyph />
        <Arrows><ArrowMark $r={-45} /><ArrowMark $r={135} /></Arrows>
        <Sheet $w={265} $pad={22}><Folder s={12} />DASHBOARD 1 — Suivi des Demandes</Sheet>
        <Sheet $w={280} $pad={22}><Folder s={12} />DASHBOARD 2A — Supervision Techniq</Sheet>
        <Sheet $w={282} $pad={22}><Folder s={12} />DASHBOARD 2B — Supervision Techniq</Sheet>
        <Sheet $w={281} $pad={19}>DASHBOARD 3 — Vue Infrastructure (Serv</Sheet>
        <AddSheet>+</AddSheet>
      </SheetBar>

      <Dialog>
        <Close $r={10} $t={7}><X /></Close>
        <DialogTitle>Paramètres de la source de données</DialogTitle>
        <DialogText>Gérer les paramètres pour les sources de données que vous avez connectées pour utiliser Power BI Desktop.</DialogText>
        <RadioRow>
          <Radio $on />Sources de données dans le fichier actif
          <Radio $left={30} />Autorisations globales
        </RadioRow>
        <SearchRow>
          <SearchBox>Rechercher dans les paramètres de la source de données</SearchBox>
          <SortBtn><Sort /></SortBtn>
        </SearchRow>
        <ListBox>
          <ListHead><ListMark /></ListHead>
        </ListBox>
        <ActionRow>
          <Action $w={141}>Changer la source...</Action>
          <Action $w={116}>Exporter PBIDS</Action>
          <Action $w={186}>Modifier les autorisations...</Action>
          <Action $w={149} $dark>Effacer les autorisations</Action>
          <SplitCaret $w={18} $dark><CaretDown /></SplitCaret>
        </ActionRow>
        <DialogFoot><Primary $w={67}>Fermer</Primary></DialogFoot>
        <InnerDialog>
          <Close $r={10} $t={8}><X /></Close>
          <InnerTitle>Base de données MySQL</InnerTitle>
          <InnerLabel $top={18}>Serveur</InnerLabel>
          <InnerInput>localhost:3307</InnerInput>
          <InnerLabel $top={6}>Base de données</InnerLabel>
          <InnerInput>db_ooredoo</InnerInput>
          <Advanced><Tri />Options avancées</Advanced>
          <InnerFoot><Primary $w={66}>OK</Primary><Action $w={73}>Annuler</Action></InnerFoot>
        </InnerDialog>
      </Dialog>
    </Shell>
  );
}
